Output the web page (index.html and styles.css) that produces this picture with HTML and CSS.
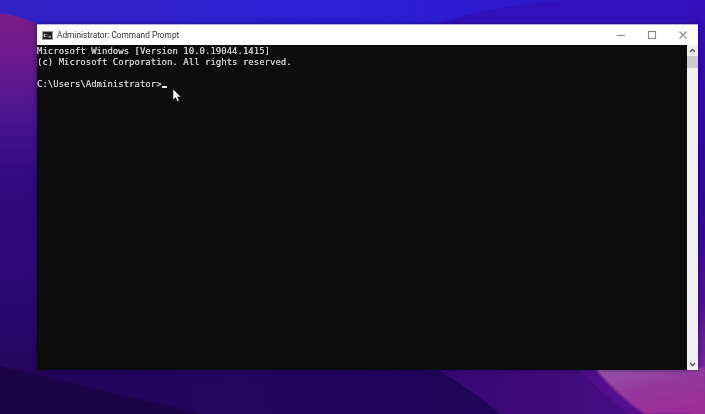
FILE: index.html
```html
<!DOCTYPE html>
<html lang="en">
<head>
<meta charset="utf-8">
<title>Administrator: Command Prompt</title>
<link rel="stylesheet" href="styles.css">
</head>
<body>
<svg class="wallpaper" viewBox="0 0 705 414" preserveAspectRatio="none" aria-hidden="true">
  <defs>
    <linearGradient id="sky" x1="0" y1="0" x2="1" y2="0">
      <stop offset="0" stop-color="#3322c4"/>
      <stop offset="0.5" stop-color="#2c1fd6"/>
      <stop offset="1" stop-color="#3210bc"/>
    </linearGradient>
    <linearGradient id="left" x1="0" y1="0" x2="0" y2="1">
      <stop offset="0" stop-color="#7a1c8c"/>
      <stop offset="0.1" stop-color="#6e1a8c"/>
      <stop offset="0.25" stop-color="#4c1590"/>
      <stop offset="0.4" stop-color="#330a80"/>
      <stop offset="0.65" stop-color="#2d0876"/>
      <stop offset="0.88" stop-color="#260660"/>
      <stop offset="1" stop-color="#1f0552"/>
    </linearGradient>
    <linearGradient id="right" x1="0" y1="0" x2="0" y2="1">
      <stop offset="0" stop-color="#3210bc"/>
      <stop offset="0.5" stop-color="#2e0a96"/>
      <stop offset="0.72" stop-color="#4a1290"/>
      <stop offset="0.9" stop-color="#7a2a96"/>
      <stop offset="1" stop-color="#9a2f98"/>
    </linearGradient>
    <linearGradient id="bottom" x1="0" y1="0" x2="1" y2="0">
      <stop offset="0" stop-color="#220558"/>
      <stop offset="0.35" stop-color="#24065f"/>
      <stop offset="0.65" stop-color="#1f0458"/>
      <stop offset="1" stop-color="#23055f"/>
    </linearGradient>
    <linearGradient id="violet" x1="0" y1="0" x2="1" y2="0">
      <stop offset="0" stop-color="#340870"/>
      <stop offset="1" stop-color="#4f0d88"/>
    </linearGradient>
    <linearGradient id="pink" x1="0" y1="0" x2="0.5" y2="1">
      <stop offset="0" stop-color="#9a5cae"/>
      <stop offset="0.5" stop-color="#93389f"/>
      <stop offset="1" stop-color="#9c2f98"/>
    </linearGradient>
    <filter id="soft"><feGaussianBlur stdDeviation="0.8"/></filter>
  </defs>
  <rect width="705" height="414" fill="url(#sky)"/>
  <path d="M420 30C470 12 520 0 600 0H705V30Z" fill="#3110bd"/>
  <rect x="690" width="15" height="414" fill="url(#right)"/>
  <path d="M0 13C14 15 26 18 40 26V414H0Z" fill="url(#left)"/>
  <rect y="370" width="690" height="44" fill="url(#bottom)"/>
  <path d="M0 366C60 382 140 398 200 414H0Z" fill="#1b0448"/>
  <path d="M434 368H690V414H500C480 396 458 382 434 368Z" fill="url(#violet)"/>
  <path d="M579 368H690V414H630C610 400 592 385 579 368Z" fill="#520e8c"/>
  <path d="M595 368H705V414H644C625 400 608 385 595 368Z" fill="url(#pink)" filter="url(#soft)"/>
</svg>
<main class="window">
  <header class="titlebar">
    <svg class="app-icon" viewBox="0 0 11 9" aria-hidden="true">
      <rect x="0.5" y="0.5" width="10" height="8" fill="#222" stroke="#9a9a9a"/>
      <path d="M3.6 3.4H2.2V5.6H3.6M5 3.6V4M5 5.2V5.6M6.5 5.8H9" fill="none" stroke="#f2f2f2" stroke-width="0.9"/>
    </svg>
    <span class="title">Administrator: Command Prompt</span>
    <div class="controls">
      <svg class="ctl" viewBox="0 0 10 10" aria-hidden="true"><path d="M1 5.5H9"/></svg>
      <svg class="ctl" viewBox="0 0 10 10" aria-hidden="true"><rect x="1.5" y="1.5" width="7" height="7"/></svg>
      <svg class="ctl" viewBox="0 0 10 10" aria-hidden="true"><path d="M1.5 1.5 8.5 8.5M8.5 1.5 1.5 8.5"/></svg>
    </div>
  </header>
  <div class="body">
    <pre class="console">Microsoft Windows [Version 10.0.19044.1415]
(c) Microsoft Corporation. All rights reserved.

C:\Users\Administrator&gt;<span class="caret"></span></pre>
    <div class="scrollbar">
      <svg class="arrow" viewBox="0 0 7 5" aria-hidden="true"><path d="M1 4 3.5 1.5 6 4"/></svg>
      <div class="thumb"></div>
      <div class="track"></div>
      <svg class="arrow" viewBox="0 0 7 5" aria-hidden="true"><path d="M1 1 3.5 3.5 6 1"/></svg>
    </div>
    <svg class="pointer" viewBox="0 0 10 15" aria-hidden="true"><path d="M1 1V12L3.6 9.6 5.4 13.6 7.3 12.7 5.5 8.9H9Z"/></svg>
  </div>
</main>
</body>
</html>
```
FILE: styles.css
```css
html, body {
  margin: 0;
  height: 100%;
}
body {
  box-sizing: border-box;
  width: 705px;
  height: 414px;
  padding: 24px 7px 44px 37px;
  overflow: hidden;
  display: flex;
  background: #2c1fd6;
}
.wallpaper {
  position: absolute;
  inset: 0;
  width: 705px;
  height: 414px;
}
.window {
  position: relative;
  flex: 1;
  display: flex;
  flex-direction: column;
  min-width: 0;
  box-shadow: 0 0 5px rgba(15, 0, 60, 0.55);
}
.titlebar {
  flex: 0 0 21px;
  display: flex;
  align-items: center;
  padding-left: 5px;
  background: #fff;
  border-top: 1px solid #b9aee8;
  box-sizing: border-box;
}
.app-icon {
  width: 11px;
  height: 9px;
  margin-right: 4px;
  filter: blur(0.3px);
}
.title {
  font: 8.3px/1 Roboto, "Noto Sans", sans-serif;
  color: #333;
  filter: blur(0.2px);
}
.controls {
  margin-left: auto;
  display: flex;
  gap: 21px;
  padding-right: 10px;
}
.ctl {
  width: 10px;
  height: 10px;
  fill: none;
  stroke: #8a8a8a;
  stroke-width: 1.1;
}
.body {
  position: relative;
  flex: 1;
  display: flex;
  min-height: 0;
}
.console {
  flex: 1;
  margin: 0;
  padding: 1px 0 0;
  background: #0c0c0c;
  color: #cccccc;
  font: 9px/11px "DejaVu Sans Mono", "Liberation Mono", monospace;
  text-shadow: 0 0 0.6px #cccccc;
  filter: blur(0.25px);
}
.caret {
  display: inline-block;
  width: 5.5px;
  height: 2px;
  background: #e8e8e8;
  vertical-align: -1px;
}
.scrollbar {
  flex: 0 0 11px;
  display: flex;
  flex-direction: column;
  background: #f0f0f0;
}
.arrow {
  flex: 0 0 5px;
  width: 7px;
  height: 5px;
  margin: 3px auto;
  fill: none;
  stroke: #555;
  stroke-width: 1.3;
}
.thumb {
  flex: 0 0 12px;
  background: #cdcdcd;
}
.track {
  flex: 1;
}
.pointer {
  position: absolute;
  left: 135px;
  top: 43px;
  width: 10px;
  height: 15px;
  fill: #fff;
  stroke: #111;
  stroke-width: 0.6;
}
```
